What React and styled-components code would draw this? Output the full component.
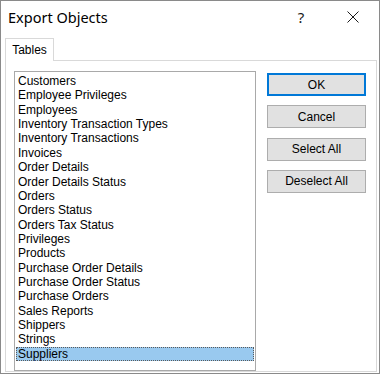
import React from 'react';
import styled, { createGlobalStyle } from 'styled-components';

const GlobalStyle = createGlobalStyle`
	html, body {
		margin: 0;
		padding: 0;
		background: #ffffff;
	}
	* {
		box-sizing: border-box;
	}
`;

const Window = styled.div`
	width: 380px;
	height: 374px;
	border: 1px solid #8a8a8a;
	background: #ffffff;
	display: flex;
	flex-direction: column;
	font-family: 'Liberation Sans', Arial, sans-serif;
	color: #000000;
	overflow: hidden;
`;

const TitleBar = styled.div`
	height: 37px;
	display: flex;
	align-items: center;
	padding: 0 0 0 7px;
	flex-shrink: 0;
`;

const Title = styled.div`
	flex: 1;
	font-family: 'Noto Sans', 'Liberation Sans', sans-serif;
	font-size: 14.5px;
	color: #000000;
	padding-bottom: 6px;
`;

const TitleButton = styled.div`
	width: 52px;
	height: 31px;
	display: flex;
	align-items: center;
	justify-content: center;
	font-family: 'Noto Sans', 'Liberation Sans', sans-serif;
	font-size: 15px;
	color: #1a1a1a;
	padding-bottom: 6px;
`;

const Body = styled.div`
	flex: 1;
	display: flex;
	flex-direction: column;
	padding: 0 2px 1px 4px;
`;

const TabStrip = styled.div`
	display: flex;
	height: 23px;
	position: relative;
	z-index: 1;
`;

const Tab = styled.div`
	width: 49px;
	height: 23px;
	border: 1px solid #d9d9d9;
	border-bottom: none;
	background: #ffffff;
	font-size: 12px;
	display: flex;
	align-items: center;
	justify-content: center;
	padding-bottom: 1px;
`;

const Panel = styled.div`
	flex: 1;
	margin-top: -1px;
	border: 1px solid #d9d9d9;
	display: flex;
	gap: 11px;
	padding: 10px 8px 0 8px;
`;

const ListBox = styled.div`
	width: 242px;
	height: 300px;
	border: 1px solid #a9a9a9;
	padding: 2px 1px;
	display: flex;
	flex-direction: column;
`;

const ListItem = styled.div`
	height: 14.37px;
	line-height: 14px;
	font-size: 12px;
	padding-left: 2px;
	white-space: nowrap;
	color: #000000;
	background: ${({ $selected }) => ($selected ? '#99c9ef' : 'transparent')};
	outline: ${({ $selected }) => ($selected ? '1px dotted #5a5a5a' : 'none')};
	outline-offset: -1px;
`;

const ButtonColumn = styled.div`
	display: flex;
	flex-direction: column;
	gap: 9.3px;
	padding-top: 2px;
`;

const Button = styled.div`
	width: 99px;
	height: 23px;
	background: #e1e1e1;
	border: ${({ $default }) => ($default ? '2px solid #0078d7' : '1px solid #adadad')};
	font-size: 12px;
	display: flex;
	align-items: center;
	justify-content: center;
`;

const tables = [
	'Customers',
	'Employee Privileges',
	'Employees',
	'Inventory Transaction Types',
	'Inventory Transactions',
	'Invoices',
	'Order Details',
	'Order Details Status',
	'Orders',
	'Orders Status',
	'Orders Tax Status',
	'Privileges',
	'Products',
	'Purchase Order Details',
	'Purchase Order Status',
	'Purchase Orders',
	'Sales Reports',
	'Shippers',
	'Strings',
	'Suppliers',
];

const CloseIcon = () => (
	<svg width="12" height="12" viewBox="0 0 12 12">
		<path d="M0.5 0.5 L11.5 11.5 M11.5 0.5 L0.5 11.5" stroke="#1a1a1a" strokeWidth="1" fill="none" />
	</svg>
);

const App = () => {
	return (
		<>
			<GlobalStyle />
			<Window>
				<TitleBar>
					<Title>Export Objects</Title>
					<TitleButton>?</TitleButton>
					<TitleButton>
						<CloseIcon />
					</TitleButton>
				</TitleBar>
				<Body>
					<TabStrip>
						<Tab>Tables</Tab>
					</TabStrip>
					<Panel>
						<ListBox>
							{tables.map((name) => (
								<ListItem key={name} $selected={name === 'Suppliers'}>
									{name}
								</ListItem>
							))}
						</ListBox>
						<ButtonColumn>
							<Button $default>OK</Button>
							<Button>Cancel</Button>
							<Button>Select All</Button>
							<Button>Deselect All</Button>
						</ButtonColumn>
					</Panel>
				</Body>
			</Window>
		</>
	);
};

export default App;
